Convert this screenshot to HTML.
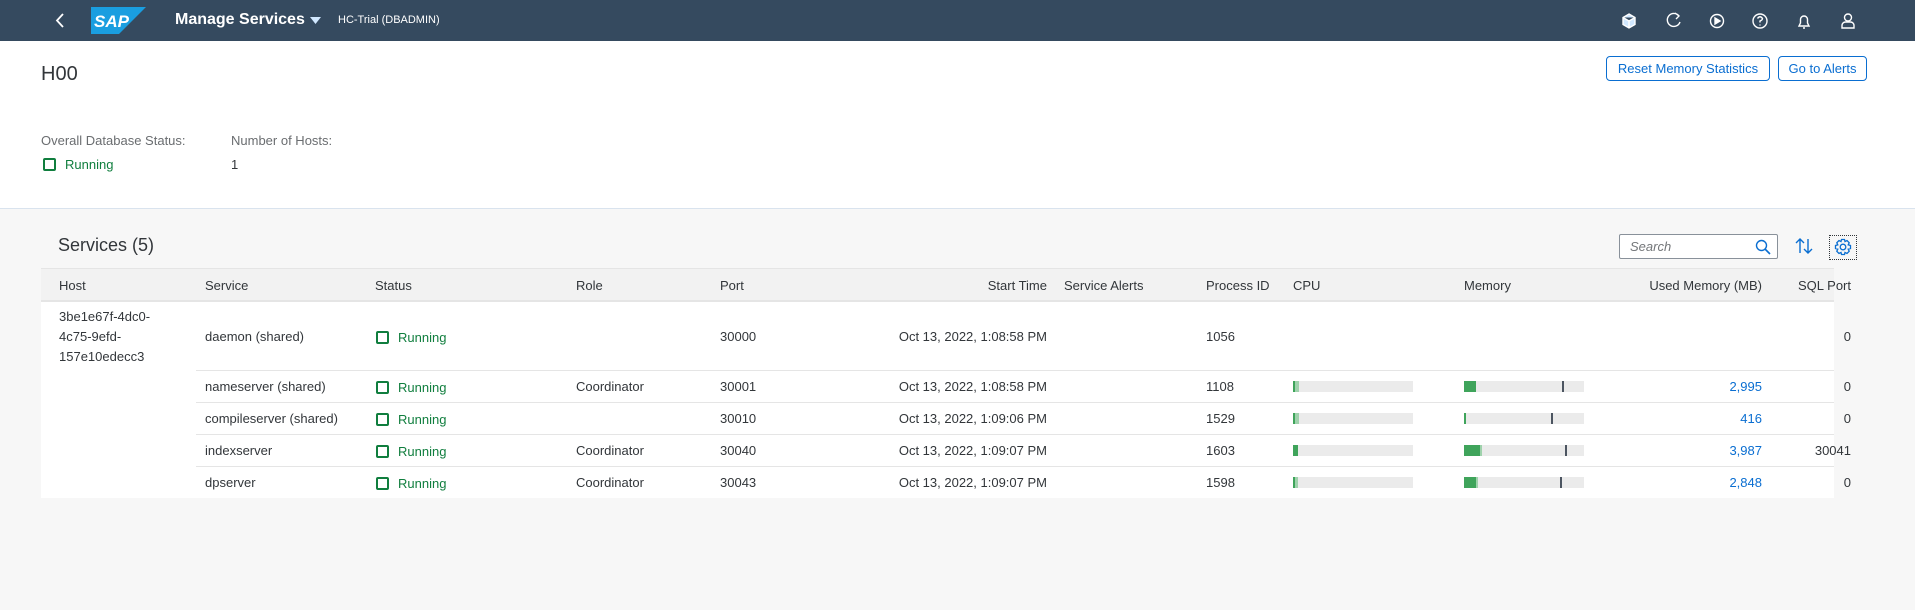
<!DOCTYPE html>
<html><head><meta charset="utf-8"><style>
*{margin:0;padding:0;box-sizing:border-box}
body{width:1915px;height:610px;overflow:hidden;background:#f7f7f7;font-family:"Liberation Sans",sans-serif;color:#32363a;font-size:13px;position:relative}
.a{position:absolute;white-space:nowrap}
.hdr{position:absolute;left:0;top:0;width:1915px;height:41px;background:#354a5f}
.top{position:absolute;left:0;top:41px;width:1915px;height:168px;background:#fff;border-bottom:1px solid #d9e3ee}
.btn{position:absolute;height:25px;border:1px solid #0a6ed1;border-radius:4px;color:#0a6ed1;background:#fff;font-size:13px;line-height:23px;text-align:center}
.lbl{color:#6a6d70}
.sq{display:inline-block;width:13px;height:13px;border:2px solid #107e3e;border-radius:2px;vertical-align:-2px;margin-right:9px}
.run{color:#107e3e}
.tbl{position:absolute;left:41px;top:268px;width:1793px;height:230px;background:#fff}
.th{position:absolute;left:41px;top:268px;width:1793px;height:34px;background:#f2f2f2;border-top:1px solid #e5e5e5;border-bottom:2px solid #e5e5e5}
.sep{position:absolute;left:196px;width:1638px;height:1px;background:#e5e5e5}
.r{text-align:right}
.bar{position:absolute;height:11px;background:#ebebeb;width:120px}
.bar i{position:absolute;top:0;height:11px;background:#3fa45b}
.bar b{position:absolute;top:0;height:11px;background:#9fd2ac}
.bar u{position:absolute;top:0;height:11px;width:2px;background:#4c5561}
.lnk{color:#0a6ed1}
</style></head><body>
<div class="hdr"></div>
<svg class="a" style="left:54px;top:12px" width="12" height="17" viewBox="0 0 12 17"><path d="M9 2 L3 8.5 L9 15" stroke="#fff" stroke-width="1.8" fill="none"/></svg>
<svg class="a" style="left:91px;top:7px" width="55" height="27" viewBox="0 0 55 27"><polygon points="0,0 55,0 28,27 0,27" fill="#1a9ee0"/><text x="3" y="20" font-family="Liberation Sans" font-weight="bold" font-size="17" fill="#fff" font-style="italic">SAP</text></svg>
<div class="a" style="left:175px;top:11px;color:#fff;font-weight:bold;font-size:16px">Manage Services</div>
<svg class="a" style="left:310px;top:17px" width="11" height="8"><polygon points="0,0 11,0 5.5,7" fill="#d1e8ff"/></svg>
<div class="a" style="left:338px;top:14px;color:#fff;font-size:11px">HC-Trial (DBADMIN)</div>
<svg class="a" style="left:1620px;top:10px" width="240" height="22" viewBox="0 0 240 22" fill="none" stroke="#fff" stroke-width="1.4">
<path d="M9 4 L15 7.5 L15 14.5 L9 18 L3 14.5 L3 7.5 Z M3 7.5 L9 11 L15 7.5 M9 11 V18" fill="#d1e8ff" stroke="#fff"/>
<path d="M59 6 A6.5 6.5 0 1 0 60 12 M55 3 L59 6 L56 9"/>
<circle cx="97" cy="11" r="6.5"/><path d="M95 8 L100 11 L95 14 Z" fill="#fff"/>
<circle cx="140" cy="11" r="7"/><path d="M137.5 8.5 Q140 5 142.5 8.5 Q142.5 10 140 11 V12.5 M140 14.5 V15.5"/>
<path d="M179 16 H189 L187.5 13 V9.5 A3.5 3.5 0 0 0 180.5 9.5 V13 Z M183 18 H185"/>
<circle cx="228" cy="7.5" r="3.5"/><path d="M222 18 V15.5 A3.5 3.5 0 0 1 225.5 12 H230.5 A3.5 3.5 0 0 1 234 15.5 V18 Z"/>
</svg>
<div class="top"></div>
<div class="a" style="left:41px;top:63px;font-size:20px">H00</div>
<div class="btn" style="left:1606px;top:56px;width:164px">Reset Memory Statistics</div>
<div class="btn" style="left:1778px;top:56px;width:89px">Go to Alerts</div>
<div class="a lbl" style="left:41px;top:133px">Overall Database Status:</div>
<div class="a lbl" style="left:231px;top:133px">Number of Hosts:</div>
<div class="a run" style="left:43px;top:157px"><span class="sq"></span>Running</div>
<div class="a" style="left:231px;top:157px">1</div>
<div class="a" style="left:58px;top:235px;font-size:18px">Services (5)</div>
<div class="a" style="left:1619px;top:234px;width:159px;height:25px;background:#fff;border:1px solid #89919a;border-radius:2px"><span style="position:absolute;left:10px;top:4px;font-style:italic;color:#74777a;font-size:13px">Search</span>
<svg style="position:absolute;right:6px;top:4px" width="16" height="16"><circle cx="6.5" cy="6.5" r="5" stroke="#0a6ed1" stroke-width="1.4" fill="none"/><path d="M10 10 L15 15" stroke="#0a6ed1" stroke-width="1.6"/></svg></div>
<svg class="a" style="left:1795px;top:237px" width="18" height="18" fill="none" stroke="#0a6ed1" stroke-width="1.4"><path d="M5 16 V2 M1 6 L5 2 L9 6 M13 2 V16 M9 12 L13 16 L17 12"/></svg>
<div class="a" style="left:1829px;top:235px;width:28px;height:25px;border:1px dotted #32363a"></div>
<svg class="a" style="left:1834px;top:238px" width="18" height="18" viewBox="0 0 18 18" fill="none" stroke="#0a6ed1" stroke-width="1.3"><circle cx="9" cy="9" r="2.8"/><path d="M7.5 1.5 H10.5 L11 3.6 L13 2.6 L15.2 4.8 L14.2 6.8 L16.5 7.5 V10.5 L14.2 11.2 L15.2 13.2 L13 15.4 L11 14.4 L10.5 16.5 H7.5 L7 14.4 L5 15.4 L2.8 13.2 L3.8 11.2 L1.5 10.5 V7.5 L3.8 6.8 L2.8 4.8 L5 2.6 L7 3.6 Z"/></svg>
<div class="tbl"></div>
<div class="th"></div>
<div class="a" style="left:59px;top:278px">Host</div>
<div class="a" style="left:205px;top:278px">Service</div>
<div class="a" style="left:375px;top:278px">Status</div>
<div class="a" style="left:576px;top:278px">Role</div>
<div class="a" style="left:720px;top:278px">Port</div>
<div class="a r" style="left:900px;width:147px;top:278px">Start Time</div>
<div class="a" style="left:1064px;top:278px">Service Alerts</div>
<div class="a" style="left:1206px;top:278px">Process ID</div>
<div class="a" style="left:1293px;top:278px">CPU</div>
<div class="a" style="left:1464px;top:278px">Memory</div>
<div class="a r" style="left:1600px;width:162px;top:278px">Used Memory (MB)</div>
<div class="a r" style="left:1760px;width:91px;top:278px">SQL Port</div>
<div class="a" style="left:59px;top:307px;line-height:20px">3be1e67f-4dc0-<br>4c75-9efd-<br>157e10edecc3</div>
<div class="sep" style="top:370px"></div>
<div class="sep" style="top:402px"></div>
<div class="sep" style="top:434px"></div>
<div class="sep" style="top:466px"></div>

<div class="a" style="left:205px;top:329px">daemon (shared)</div>
<div class="a run" style="left:376px;top:330px"><span class="sq"></span>Running</div>
<div class="a" style="left:720px;top:329px">30000</div>
<div class="a r" style="left:860px;width:187px;top:329px">Oct 13, 2022, 1:08:58 PM</div>
<div class="a" style="left:1206px;top:329px">1056</div>
<div class="a r" style="left:1760px;width:91px;top:329px">0</div>

<div class="a" style="left:205px;top:379px">nameserver (shared)</div>
<div class="a run" style="left:376px;top:380px"><span class="sq"></span>Running</div>
<div class="a" style="left:576px;top:379px">Coordinator</div>
<div class="a" style="left:720px;top:379px">30001</div>
<div class="a r" style="left:860px;width:187px;top:379px">Oct 13, 2022, 1:08:58 PM</div>
<div class="a" style="left:1206px;top:379px">1108</div>
<div class="bar" style="left:1293px;top:381px"><b style="left:0;width:6px"></b><i style="left:0;width:2px"></i></div>
<div class="bar" style="left:1464px;top:381px"><i style="left:0;width:12px"></i><u style="left:98px"></u></div>
<div class="a r lnk" style="left:1600px;width:162px;top:379px">2,995</div>
<div class="a r" style="left:1760px;width:91px;top:379px">0</div>

<div class="a" style="left:205px;top:411px">compileserver (shared)</div>
<div class="a run" style="left:376px;top:412px"><span class="sq"></span>Running</div>
<div class="a" style="left:720px;top:411px">30010</div>
<div class="a r" style="left:860px;width:187px;top:411px">Oct 13, 2022, 1:09:06 PM</div>
<div class="a" style="left:1206px;top:411px">1529</div>
<div class="bar" style="left:1293px;top:413px"><b style="left:0;width:6px"></b><i style="left:0;width:2px"></i></div>
<div class="bar" style="left:1464px;top:413px"><i style="left:0;width:2px"></i><u style="left:87px"></u></div>
<div class="a r lnk" style="left:1600px;width:162px;top:411px">416</div>
<div class="a r" style="left:1760px;width:91px;top:411px">0</div>

<div class="a" style="left:205px;top:443px">indexserver</div>
<div class="a run" style="left:376px;top:444px"><span class="sq"></span>Running</div>
<div class="a" style="left:576px;top:443px">Coordinator</div>
<div class="a" style="left:720px;top:443px">30040</div>
<div class="a r" style="left:860px;width:187px;top:443px">Oct 13, 2022, 1:09:07 PM</div>
<div class="a" style="left:1206px;top:443px">1603</div>
<div class="bar" style="left:1293px;top:445px"><i style="left:0;width:5px"></i></div>
<div class="bar" style="left:1464px;top:445px"><b style="left:0;width:18px"></b><i style="left:0;width:16px"></i><u style="left:101px"></u></div>
<div class="a r lnk" style="left:1600px;width:162px;top:443px">3,987</div>
<div class="a r" style="left:1760px;width:91px;top:443px">30041</div>

<div class="a" style="left:205px;top:475px">dpserver</div>
<div class="a run" style="left:376px;top:476px"><span class="sq"></span>Running</div>
<div class="a" style="left:576px;top:475px">Coordinator</div>
<div class="a" style="left:720px;top:475px">30043</div>
<div class="a r" style="left:860px;width:187px;top:475px">Oct 13, 2022, 1:09:07 PM</div>
<div class="a" style="left:1206px;top:475px">1598</div>
<div class="bar" style="left:1293px;top:477px"><b style="left:0;width:5px"></b><i style="left:0;width:2px"></i></div>
<div class="bar" style="left:1464px;top:477px"><b style="left:0;width:14px"></b><i style="left:0;width:12px"></i><u style="left:96px"></u></div>
<div class="a r lnk" style="left:1600px;width:162px;top:475px">2,848</div>
<div class="a r" style="left:1760px;width:91px;top:475px">0</div>
</body></html>
